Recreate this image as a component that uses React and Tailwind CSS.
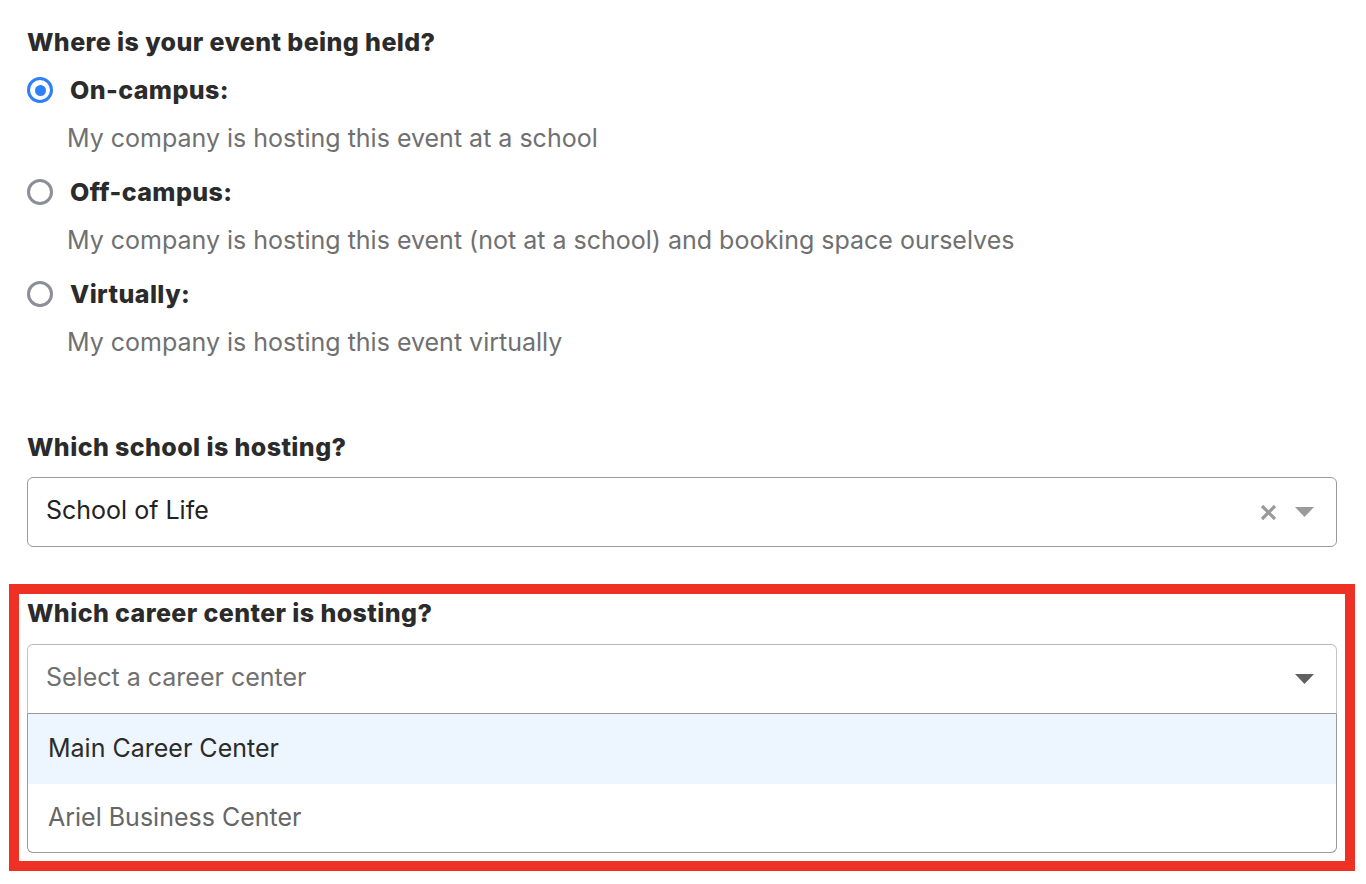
import { useState } from 'react';

const options = [
  { id: 'on', label: 'On-campus:', desc: 'My company is hosting this event at a school' },
  { id: 'off', label: 'Off-campus:', desc: 'My company is hosting this event (not at a school) and booking space ourselves' },
  { id: 'virtual', label: 'Virtually:', desc: 'My company is hosting this event virtually' },
];

const Caret = ({ color }) => (
  <svg width="19" height="10" viewBox="0 0 19 10">
    <path d="M0 0 H19 L9.5 10 Z" fill={color} />
  </svg>
);

function Radio({ checked }) {
  if (checked) {
    return (
      <span className="flex h-[26px] w-[26px] items-center justify-center rounded-full border-[3px] border-[#2f80f6] bg-white">
        <span className="h-[11px] w-[11px] rounded-full bg-[#2f80f6]" />
      </span>
    );
  }
  return <span className="h-[26px] w-[26px] rounded-full border-[3px] border-[#8e8e99] bg-white" />;
}

export default function App() {
  const [where, setWhere] = useState('on');

  return (
    <div className="min-h-screen bg-white pl-[27px] pr-[29px] pt-[26px] text-[#2b2b2b]" style={{ fontFamily: 'Inter, "Noto Sans", sans-serif' }}>
      <h2 className="text-[25px] font-extrabold leading-[32px] tracking-[0.4px]">Where is your event being held?</h2>

      <div className="mt-[12px]">
        {options.map((o, i) => (
          <div key={o.id} className={i > 0 ? 'mt-[18px]' : ''}>
            <label className="flex h-[40px] cursor-pointer items-center" onClick={() => setWhere(o.id)}>
              <Radio checked={where === o.id} />
              <span className="ml-[17px] text-[25px] font-extrabold leading-[32px] tracking-[0.4px]">{o.label}</span>
            </label>
            <p className="mt-[12px] pl-[40px] text-[25px] leading-[32px] text-[#707070]">{o.desc}</p>
          </div>
        ))}
      </div>

      <h3 className="mt-[73px] text-[25px] font-extrabold leading-[32px] tracking-[0.4px]">Which school is hosting?</h3>
      <div className="mt-[14px] flex h-[70px] items-center justify-between rounded-[6px] border-[1.5px] border-[#9a9a9a] pl-[18px] pr-[22px]">
        <span className="-mt-[3px] text-[25px] text-[#222]">School of Life</span>
        <div className="flex items-center gap-[18px]">
          <svg width="17" height="17" viewBox="0 0 17 17">
            <path d="M2 2 L15 15 M15 2 L2 15" stroke="#9a9a9a" strokeWidth="3.2" strokeLinecap="butt" />
          </svg>
          <Caret color="#9a9a9a" />
        </div>
      </div>

      <div className="-mx-[18px] mt-[37px] border-[10px] border-[#ee3124] px-[8px] pb-[8px] pt-[3px]">
        <h3 className="text-[25px] font-extrabold leading-[32px] tracking-[0.4px]">Which career center is hosting?</h3>
        <div className="mt-[15px]">
          <div className="flex h-[70px] items-center justify-between rounded-t-[6px] border-x-[1.5px] border-t-[1.5px] border-b-[1.5px] border-x-[#c4c4c4] border-t-[#b8b8b8] border-b-[#9a9a9a] pl-[18px] pr-[22px]">
            <span className="-mt-[3px] text-[25px] text-[#707070]">Select a career center</span>
            <Caret color="#606060" />
          </div>
          <div className="rounded-b-[6px] border-x-[1.5px] border-b-[1.5px] border-[#9a9a9a]">
            <div className="flex h-[70px] items-center bg-[#edf5fe] pl-[20px] text-[25px] text-[#2b2b2b]">Main Career Center</div>
            <div className="flex h-[68px] items-center pl-[20px] text-[25px] text-[#666]">Ariel Business Center</div>
          </div>
        </div>
      </div>
    </div>
  );
}
